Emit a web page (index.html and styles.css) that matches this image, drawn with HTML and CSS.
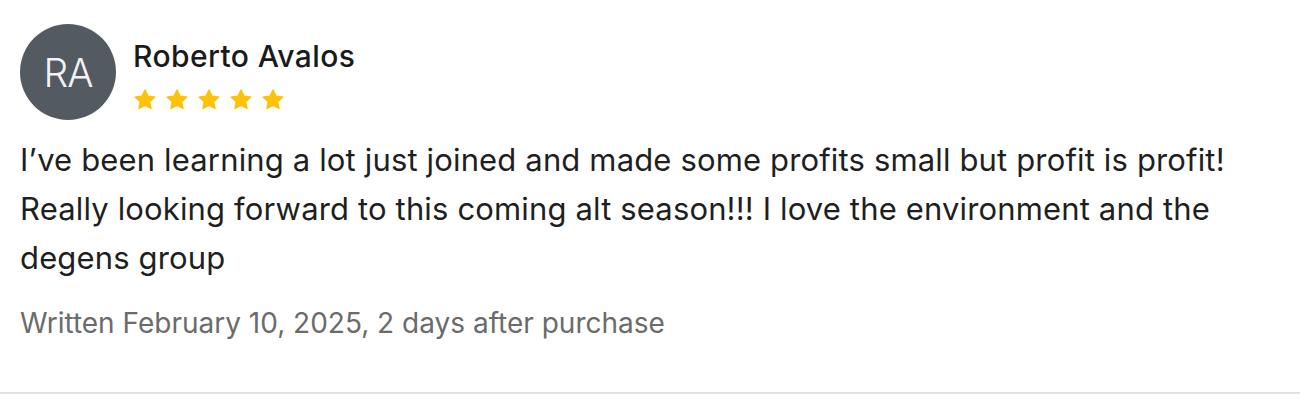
FILE: index.html
```html
<!DOCTYPE html>
<html>
<head>
<meta charset="utf-8">
<link rel="stylesheet" href="styles.css">
</head>
<body>
<div class="review">
  <div class="header">
    <div class="avatar">RA</div>
    <div class="meta">
      <div class="name">Roberto Avalos</div>
      <div class="stars">
        <svg class="star" viewBox="0 0 24 24"><path d="M12 2.2l2.9 6.1 6.6.8-4.9 4.6 1.3 6.6L12 17.1l-5.9 3.2 1.3-6.6-4.9-4.6 6.6-.8z"/></svg>
        <svg class="star" viewBox="0 0 24 24"><path d="M12 2.2l2.9 6.1 6.6.8-4.9 4.6 1.3 6.6L12 17.1l-5.9 3.2 1.3-6.6-4.9-4.6 6.6-.8z"/></svg>
        <svg class="star" viewBox="0 0 24 24"><path d="M12 2.2l2.9 6.1 6.6.8-4.9 4.6 1.3 6.6L12 17.1l-5.9 3.2 1.3-6.6-4.9-4.6 6.6-.8z"/></svg>
        <svg class="star" viewBox="0 0 24 24"><path d="M12 2.2l2.9 6.1 6.6.8-4.9 4.6 1.3 6.6L12 17.1l-5.9 3.2 1.3-6.6-4.9-4.6 6.6-.8z"/></svg>
        <svg class="star" viewBox="0 0 24 24"><path d="M12 2.2l2.9 6.1 6.6.8-4.9 4.6 1.3 6.6L12 17.1l-5.9 3.2 1.3-6.6-4.9-4.6 6.6-.8z"/></svg>
      </div>
    </div>
  </div>
  <p class="body">I’ve been learning a lot just joined and made some profits small but profit is profit! Really looking forward to this coming alt season!!! I love the environment and the degens group</p>
  <p class="footer">Written February 10, 2025, 2 days after purchase</p>
</div>
</body>
</html>
```
FILE: styles.css
```css
html, body {
  margin: 0;
  padding: 0;
  background: #ffffff;
}
body {
  font-family: Inter, "Noto Sans", sans-serif;
  color: #1f1f1f;
}
.review {
  padding: 24px 20px 0 20px;
  border-bottom: 2px solid #e2e2e2;
  height: 368px;
  box-sizing: content-box;
}
.header {
  display: flex;
  align-items: flex-start;
  gap: 17px;
}
.avatar {
  width: 96px;
  height: 96px;
  border-radius: 50%;
  background: #545a62;
  color: #f2f2f2;
  display: flex;
  align-items: center;
  justify-content: center;
  font-size: 39px;
  font-weight: 300;
  letter-spacing: -1px;
  flex-shrink: 0;
}
.meta {
  padding-top: 14px;
  display: flex;
  flex-direction: column;
}
.name {
  font-size: 30px;
  line-height: 37px;
  font-weight: 500;
  letter-spacing: 0.4px;
  color: #1a1a1a;
}
.stars {
  display: flex;
  gap: 8px;
  margin-top: 13px;
}
.star {
  width: 24px;
  height: 24px;
  fill: #ffc107;
  stroke: #ffc107;
  stroke-width: 1.6;
  stroke-linejoin: round;
}
.body {
  margin: 15px 0 0 0;
  font-size: 31px;
  line-height: 49px;
  letter-spacing: 0.15px;
  color: #1f1f1f;
  max-width: 1240px;
}
.footer {
  margin: 23px 0 0 0;
  font-size: 28px;
  line-height: 36px;
  color: #6b6b6b;
}
```
